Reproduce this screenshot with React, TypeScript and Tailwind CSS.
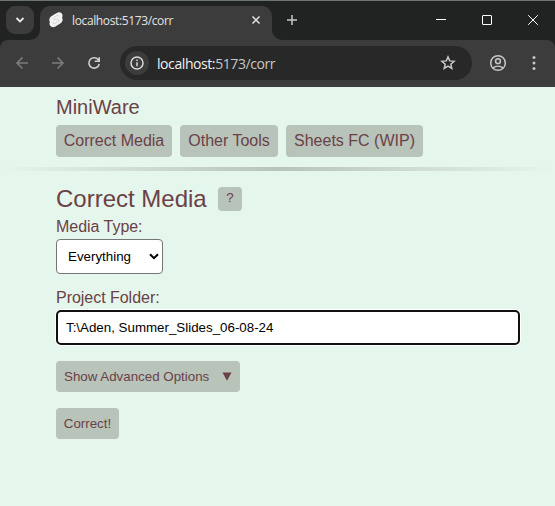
import React from "react";

function TabStrip() {
  return (
    <div className="flex h-10 bg-[#3c3c3c]">
      <div className="w-10 shrink-0 rounded-br-[10px] bg-[#202322] pl-1.5 pt-1.5">
        <button className="flex h-7 w-7 items-center justify-center rounded-[9px] bg-[#3c3c3c]" aria-label="Search tabs">
          <svg width="10" height="6" viewBox="0 0 10 6" fill="none" stroke="#e8e8e8" strokeWidth="1.8">
            <path d="M1.500 1L5 4.500 8.500 1" />
          </svg>
        </button>
      </div>
      <div className="w-[232px] shrink-0 bg-[linear-gradient(#202322_20px,#3c3c3c_20px)] pt-1.5">
        <div className="flex h-[34px] items-center rounded-t-[10px] bg-[#3c3c3c] pb-[6px] pl-[9px] pr-[11px]">
          <svg width="14" height="16" viewBox="0 0 14 16" fill="none" className="shrink-0">
            <path d="M5.5 2.2L8.4.7c2-1 4.2-.1 4.9 1.8.5 1.2.2 2.3-.3 3.1.6 1 .8 2 .4 3.3-.3 1-.9 1.8-1.8 2.3l-5.5 3.6c-1.8 1-4 .4-5-1.2-.8-1.2-.8-2.5-.2-3.6C.3 9 .1 7.9.5 6.6c.2-.8.8-1.5 1.5-2z" fill="#f3f3f3" />
            <path d="M10.200 4.800c.2-1.300-1-1.900-2.100-1.300L5 5.500c-1.200.9-.6 2.400.8 2.100l2.500-.5c1.500-.3 2.100 1.200 1 2.100L6 11.400c-1.100.6-2.200 0-2-1.300" stroke="#cfcfcf" strokeWidth=".9" />
          </svg>
          <span className="ml-[9px] flex-1 whitespace-nowrap pt-px font-['Open_Sans',sans-serif] text-[12px] leading-4 tracking-[-0.370px] text-[#e3e3e3]">localhost:5173/corr</span>
          <svg width="10" height="10" viewBox="0 0 10 10" stroke="#e3e3e3" strokeWidth="1.5" className="shrink-0">
            <path d="M1.500 1.500l7 7M8.500 1.500l-7 7" />
          </svg>
        </div>
      </div>
      <div className="flex flex-1 rounded-bl-[10px] bg-[#202322] pl-[14px]">
        <svg width="12" height="40" viewBox="0 0 12 40" stroke="#c7c7c7" strokeWidth="1.5" className="shrink-0">
          <path d="M1 20h10M6 15v10" />
        </svg>
        <div className="flex flex-1 justify-end">
          <svg width="138" height="40" viewBox="417 0 138 40" fill="none" stroke="#fff" strokeWidth="1">
            <path d="M436 19.500h10" />
            <rect x="482.500" y="15.500" width="9" height="9" rx="0.500" />
            <path d="M528.200 15.200l9.600 9.600m0-9.600l-9.600 9.600" />
          </svg>
        </div>
      </div>
    </div>
  );
}

function Toolbar() {
  return (
    <div className="bg-[#202322]">
      <div className="flex h-[47px] items-start rounded-t-[8px] bg-[#3c3c3c]">
        <svg width="120" height="46" viewBox="0 40 120 46" fill="none" strokeWidth="1.6" className="shrink-0">
          <path d="M28 63H17M22.500 57.500L17 63l5.500 5.500" stroke="#7c7c7c" />
          <path d="M52 63h11M57.500 57.500L63 63l-5.500 5.500" stroke="#7c7c7c" />
          <path d="M98.500 60.200A5.200 5.200 0 1 0 99.200 63.800M99.200 57.300V61.300H94.700" stroke="#d0d0d0" strokeWidth="1.6" />
        </svg>
        <div className="mt-1.5 flex h-[34px] w-[352px] shrink-0 items-center rounded-full bg-[#282828] pl-[5px] pr-4">
          <div className="flex h-6 w-6 items-center justify-center rounded-full bg-[#3c3c3c]">
            <svg width="14" height="14" viewBox="0 0 14 14" fill="none" stroke="#d8d8d8" strokeWidth="1.5">
              <circle cx="7" cy="7" r="6" />
              <path d="M7 6.200v4M7 3.600v1.400" />
            </svg>
          </div>
          <span className="ml-2 flex-1 whitespace-nowrap pt-px font-['Open_Sans',sans-serif] text-[14px] leading-5 tracking-[-0.420px] text-[#c7c7c7]"><span className="text-[#f0f0f0]">localhost:</span>5173/corr</span>
          <svg width="16" height="16" viewBox="0 0 16 16" fill="none" stroke="#c7c7c7" strokeWidth="1.5">
            <path d="M8 1.900l1.700 4 4.400.4-3.300 2.900 1 4.300L8 11.200l-3.800 2.300 1-4.300-3.300-2.900 4.400-.4z" />
          </svg>
        </div>
        <svg width="83" height="46" viewBox="472 40 83 46" fill="none" stroke="#c7c7c7" strokeWidth="1.5" className="shrink-0">
          <circle cx="498" cy="63" r="7.3" />
          <circle cx="498" cy="61.200" r="2.4" />
          <path d="M492.800 68c3-2.300 7.400-2.300 10.400 0" />
          <g fill="#c7c7c7" stroke="none"><circle cx="534" cy="57.500" r="1.5" /><circle cx="534" cy="63" r="1.5" /><circle cx="534" cy="68.500" r="1.5" /></g>
        </svg>
      </div>
    </div>
  );
}

export default function App() {
  return (
    <div className="relative h-[506px] w-[555px] overflow-hidden bg-[#e5f6ec] font-['Liberation_Sans',Arial,sans-serif] text-[#6b4146]">
      <div className="pointer-events-none absolute inset-x-0 top-0 z-20 h-px bg-[#6c7370]" />
      <TabStrip />
      <Toolbar />
      <header className="px-14 pt-2">
        <div className="text-[20px] leading-6">MiniWare</div>
        <nav className="mt-1.5 flex gap-2">
          <a className="flex h-8 w-[116px] items-center justify-center whitespace-nowrap rounded bg-[#b8c3ba] text-[16px]">Correct Media</a>
          <a className="flex h-8 w-[98px] items-center justify-center whitespace-nowrap rounded bg-[#b8c3ba] text-[16px]">Other Tools</a>
          <a className="flex h-8 w-[137px] items-center justify-center whitespace-nowrap rounded bg-[#b8c3ba] text-[16px]">Sheets FC (WIP)</a>
        </nav>
      </header>
      <div className="mt-2.5 h-1 bg-[linear-gradient(90deg,#e5f6ec,#b8c3ba,#e5f6ec)]" />
      <main className="pl-14 pr-[35px] pt-3.5">
        <div className="flex">
          <h1 className="w-[162px] text-[24px] leading-7">Correct Media</h1>
          <button className="mt-0.5 h-6 w-6 rounded bg-[#b8c3ba] pb-[2px] text-[13.333px] leading-5">?</button>
        </div>
        <label className="mt-[5px] block text-[16px] leading-[18px] tracking-[-0.030px]">Media Type:</label>
        <div className="mt-[3px] flex h-[35px] w-[107px] items-center justify-between rounded border border-[#767676] bg-white pl-[11px] pr-[3px] text-[13.333px] text-black">
          Everything
          <svg width="10" height="7" viewBox="0 0 10 7" fill="none" stroke="black" strokeWidth="2">
            <path d="M1 1.200l4 4 4-4" />
          </svg>
        </div>
        <label className="mt-[15px] block text-[16px] leading-[18px] tracking-[-0.030px]">Project Folder:</label>
        <input readOnly value="T:\Aden, Summer_Slides_06-08-24" className="mt-[3px] block h-[35px] w-full rounded-[5px] border-2 border-[#101010] bg-white px-2 text-[13.333px] text-black shadow-[0_0_0_1px_#fff] outline-none" />
        <button className="mt-4 flex h-[31px] w-[184px] items-center justify-between rounded bg-[#b8c3ba] px-2 text-[13.333px]">
          <span>Show Advanced Options</span>
          <svg width="10" height="9" viewBox="0 0 10 9"><path d="M.5.5h9L5 8.700z" fill="#6b4146" /></svg>
        </button>
        <button className="mt-4 flex h-[31px] w-[63px] items-center justify-center rounded bg-[#b8c3ba] text-[13.333px]">Correct!</button>
      </main>
    </div>
  );
}
